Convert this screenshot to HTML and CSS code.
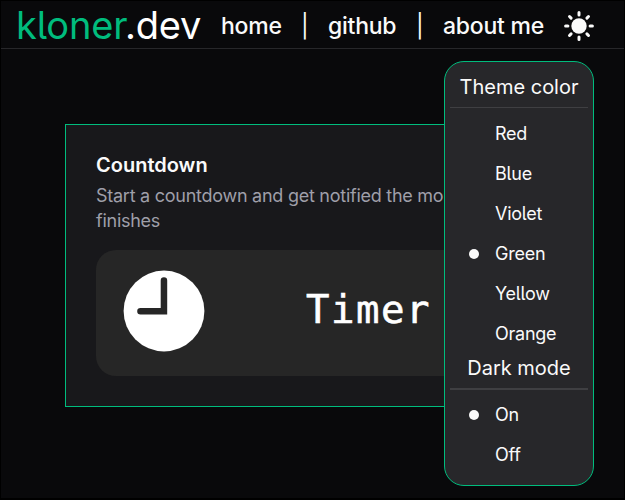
FILE: index.html
```html
<!DOCTYPE html>
<html lang="en">
<head>
<meta charset="utf-8">
<title>kloner.dev</title>
<link rel="stylesheet" href="styles.css">
</head>
<body>
<header class="bar">
  <a class="logo"><span class="accent">kloner</span>.dev</a>
  <nav class="nav"><a class="home">home</a><span class="sep">|</span><a class="github">github</a><span class="sep">|</span><a class="about">about me</a></nav>
  <button class="theme" aria-label="Theme">
    <svg width="30" height="30" viewBox="0 0 30 30" fill="none" stroke="#fafafa" stroke-width="3" stroke-linecap="round"><circle cx="15" cy="15" r="7.7" fill="#fafafa" stroke="none"/><path d="M15 1.6v2.3M15 26.1v2.3M1.6 15h2.3M26.1 15h2.3M5.5 5.5l1.6 1.6M22.9 22.9l1.6 1.6M5.5 24.5l1.6-1.6M22.9 7.1l1.6-1.6"/></svg>
  </button>
  <div class="menu">
    <h2 class="title">Theme color</h2>
    <ul class="list">
      <li>Red</li><li>Blue</li><li>Violet</li><li class="on">Green</li><li>Yellow</li><li>Orange</li>
    </ul>
    <h2 class="title second">Dark mode</h2>
    <ul class="list modes"><li class="on">On</li><li>Off</li></ul>
  </div>
</header>
<main class="main">
  <article class="card">
    <h3 class="name">Countdown</h3>
    <p class="desc">Start a countdown and get notified the moment it finishes</p>
    <div class="preview">
      <svg class="clock" width="82" height="82" viewBox="0 0 82 82"><circle cx="41" cy="41" r="40.4" fill="#fff"/><path d="M44.2 44.6H17.5a3.2 3.2 0 0 1 0-6.6h20.2V10.5a3.25 3.25 0 0 1 6.5 0z" fill="#262626"/></svg>
      <svg class="word" width="140" height="50" viewBox="0 0 140 50"><text x="0" y="38">Timer</text></svg>
    </div>
  </article>
</main>
</body>
</html>
```

FILE: styles.css
```css
* { box-sizing: border-box; }
html { background: #09090b; }
body {
  margin: 0;
  width: 625px;
  height: 500px;
  overflow: hidden;
  border: 1px solid #000;
  border-bottom-width: 2px;
  background: #09090b;
  color: #fafafa;
  font-family: Inter, sans-serif;
}
h2, h3, p, ul { margin: 0; padding: 0; }
.bar {
  position: relative;
  display: flex;
  align-items: center;
  height: 48px;
  padding-left: 15px;
  border-bottom: 1px solid #27272a;
}
.logo { width: 205px; font-size: 38px; line-height: 48px; letter-spacing: -0.2px; font-feature-settings: "cv05"; white-space: nowrap; color: #fff; }
.accent { color: #00bc7d; }
.nav { display: flex; width: 343px; padding-top: 2px; font-size: 23px; line-height: 32px; font-weight: 500; letter-spacing: -0.25px; white-space: nowrap; }
.home { width: 80px; }
.sep { width: 27px; font-weight: 400; }
.github { width: 88px; }
.theme { display: block; padding: 0; border: 0; background: none; height: 30px; margin-top: 2px; }
.menu {
  position: absolute;
  z-index: 2;
  left: 443px;
  top: 60px;
  width: 150px;
  height: 425px;
  padding: 5px;
  border: 1px solid #00bc7d;
  border-radius: 20px;
  background: #27272a;
}
.title { height: 41px; border-bottom: 1px solid #3f3f42; font-size: 20px; line-height: 40px; font-weight: 400; text-align: center; }
.second { height: 36px; border-bottom-width: 2px; line-height: 29px; }
.list { list-style: none; padding-top: 6px; font-size: 18px; line-height: 40px; letter-spacing: -0.25px; font-feature-settings: "cv05"; }
.list.modes { padding-top: 5px; }
.list li { display: flex; align-items: center; height: 40px; padding-left: 45px; }
.list .on { padding-left: 19px; }
.on::before { content: ""; width: 10px; height: 10px; margin-right: 16px; border-radius: 50%; background: #fafafa; }
.main { padding: 75px 64px; }
.card { width: 496px; height: 283px; padding: 28px 30px; border: 1px solid #00bc7d; background: #18181b; }
.name { font-size: 20px; line-height: 24px; font-weight: 600; }
.desc { padding-top: 6px; font-size: 18px; line-height: 25px; letter-spacing: -0.26px; color: #9f9fa9; }
.preview { display: flex; height: 126px; margin-top: 17px; padding: 20px 0 0 27px; border-radius: 20px; background: #262626; }
.clock { flex: none; }
.word { margin: 15px 0 0 101px; fill: #fff; stroke: #fff; stroke-width: 0.6; font-family: "DejaVu Sans Mono", monospace; font-size: 39px; letter-spacing: 1.5px; }
```
